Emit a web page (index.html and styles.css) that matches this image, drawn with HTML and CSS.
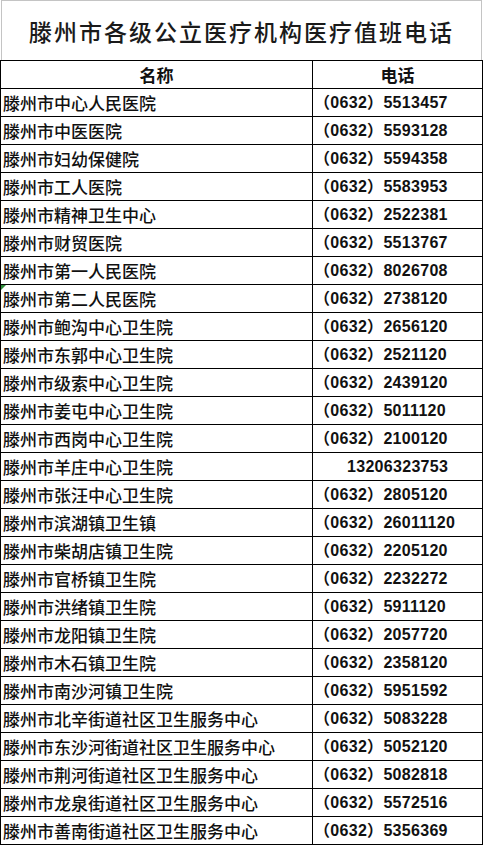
FILE: index.html
```html
<!DOCTYPE html>
<html lang="zh-CN">
<head>
<meta charset="utf-8">
<meta name="viewport" content="width=device-width, initial-scale=1">
<title>滕州市各级公立医疗机构医疗值班电话</title>
<link rel="stylesheet" href="styles.css">
</head>
<body>
<div class="sheet">
  <div class="title"><span class="title-text">滕州市各级公立医疗机构医疗值班电话</span></div>
  <table class="grid">
    <colgroup><col class="c-name"><col class="c-tel"></colgroup>
    <thead>
      <tr><th>名称</th><th>电话</th></tr>
    </thead>
    <tbody>
      <tr><td class="name">滕州市中心人民医院</td><td class="tel">（0632）5513457</td></tr>
      <tr><td class="name">滕州市中医医院</td><td class="tel">（0632）5593128</td></tr>
      <tr><td class="name">滕州市妇幼保健院</td><td class="tel">（0632）5594358</td></tr>
      <tr><td class="name">滕州市工人医院</td><td class="tel">（0632）5583953</td></tr>
      <tr><td class="name">滕州市精神卫生中心</td><td class="tel">（0632）2522381</td></tr>
      <tr><td class="name">滕州市财贸医院</td><td class="tel">（0632）5513767</td></tr>
      <tr><td class="name">滕州市第一人民医院</td><td class="tel">（0632）8026708</td></tr>
      <tr><td class="name flag">滕州市第二人民医院</td><td class="tel">（0632）2738120</td></tr>
      <tr><td class="name">滕州市鲍沟中心卫生院</td><td class="tel">（0632）2656120</td></tr>
      <tr><td class="name">滕州市东郭中心卫生院</td><td class="tel">（0632）2521120</td></tr>
      <tr><td class="name">滕州市级索中心卫生院</td><td class="tel">（0632）2439120</td></tr>
      <tr><td class="name">滕州市姜屯中心卫生院</td><td class="tel">（0632）5011120</td></tr>
      <tr><td class="name">滕州市西岗中心卫生院</td><td class="tel">（0632）2100120</td></tr>
      <tr><td class="name">滕州市羊庄中心卫生院</td><td class="tel mobile">13206323753</td></tr>
      <tr><td class="name">滕州市张汪中心卫生院</td><td class="tel">（0632）2805120</td></tr>
      <tr><td class="name">滕州市滨湖镇卫生镇</td><td class="tel">（0632）26011120</td></tr>
      <tr><td class="name">滕州市柴胡店镇卫生院</td><td class="tel">（0632）2205120</td></tr>
      <tr><td class="name">滕州市官桥镇卫生院</td><td class="tel">（0632）2232272</td></tr>
      <tr><td class="name">滕州市洪绪镇卫生院</td><td class="tel">（0632）5911120</td></tr>
      <tr><td class="name">滕州市龙阳镇卫生院</td><td class="tel">（0632）2057720</td></tr>
      <tr><td class="name">滕州市木石镇卫生院</td><td class="tel">（0632）2358120</td></tr>
      <tr><td class="name">滕州市南沙河镇卫生院</td><td class="tel">（0632）5951592</td></tr>
      <tr><td class="name">滕州市北辛街道社区卫生服务中心</td><td class="tel">（0632）5083228</td></tr>
      <tr><td class="name">滕州市东沙河街道社区卫生服务中心</td><td class="tel">（0632）5052120</td></tr>
      <tr><td class="name">滕州市荆河街道社区卫生服务中心</td><td class="tel">（0632）5082818</td></tr>
      <tr><td class="name">滕州市龙泉街道社区卫生服务中心</td><td class="tel">（0632）5572516</td></tr>
      <tr><td class="name">滕州市善南街道社区卫生服务中心</td><td class="tel">（0632）5356369</td></tr>
    </tbody>
  </table>
</div>
</body>
</html>
```
FILE: styles.css
```css
html {
  -webkit-text-size-adjust: none;
  text-size-adjust: none;
}

html, body {
  margin: 0;
  padding: 0;
  background: #fff;
}

.sheet {
  width: 483px;
  color: #111;
}

.title {
  box-sizing: border-box;
  width: 481px;
  height: 60px;
  margin-left: 1px;
  border: 1px solid #c4c4c4;
  border-bottom: none;
  display: flex;
  align-items: center;
  justify-content: center;
  padding-top: 2px;
}

.title-text {
  font-family: "Noto Sans CJK SC", sans-serif;
  font-size: 23px;
  font-weight: 500;
  letter-spacing: 2px;
  line-height: 1;
  color: #1a1a1a;
  white-space: nowrap;
}

.grid {
  border-collapse: collapse;
  table-layout: fixed;
  width: 482px;
}

.c-name { width: 312px; }
.c-tel { width: 170px; }

.grid th,
.grid td {
  border: 1px solid #000;
  height: 27px;
  padding: 0;
  line-height: 27px;
  white-space: nowrap;
  overflow: hidden;
}

.grid th {
  font-family: "Noto Sans CJK SC", sans-serif;
  font-size: 17px;
  font-weight: 700;
  text-align: center;
}

.name {
  font-family: "Noto Sans CJK SC", sans-serif;
  font-size: 17px;
  font-weight: 500;
  padding-left: 2px !important;
  position: relative;
}

.tel {
  font-family: "Liberation Sans", "Noto Sans CJK SC", sans-serif;
  font-size: 16px;
  font-weight: 700;
  letter-spacing: 0.3px;
  padding-left: 1px !important;
}

.tel.mobile {
  padding-left: 34px !important;
}

.flag::before {
  content: "";
  position: absolute;
  left: 0;
  top: 0;
  border-top: 5px solid #2e8b3a;
  border-right: 5px solid transparent;
}
```
